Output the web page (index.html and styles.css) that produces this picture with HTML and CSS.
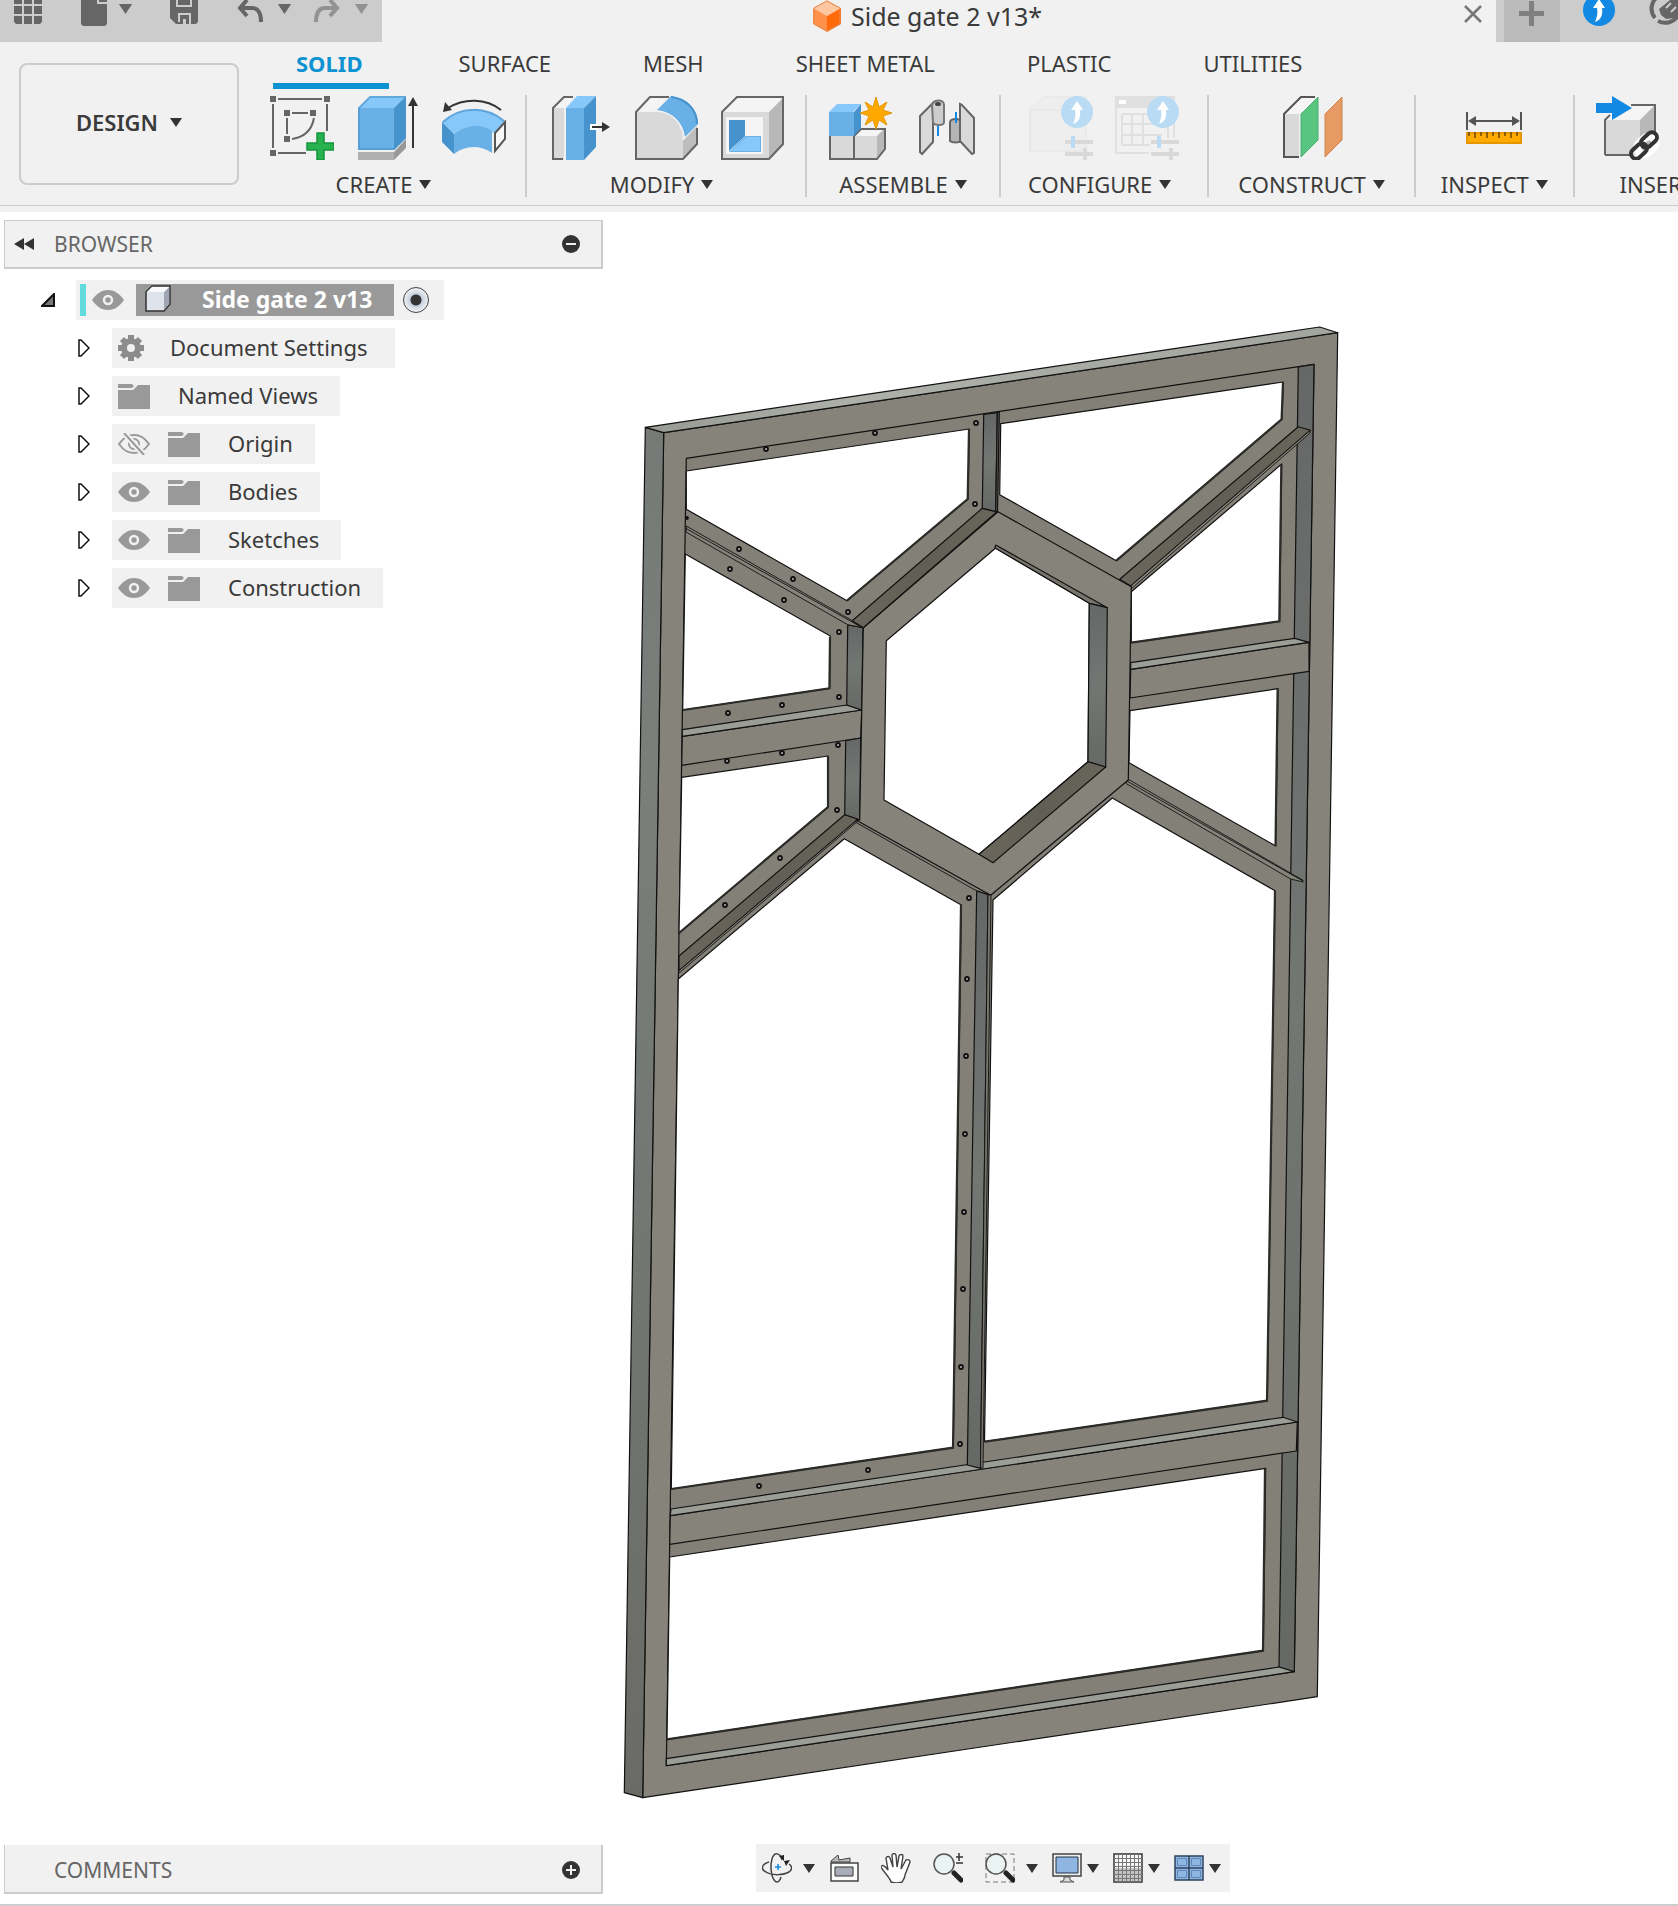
FILE: index.html
```html
<!DOCTYPE html>
<html lang="en">
<head>
<meta charset="utf-8">
<meta name="viewport" content="width=device-width, initial-scale=1">
<title>Side gate 2 v13*</title>
<link rel="stylesheet" href="styles.css">
</head>
<body>
<svg class="defs" aria-hidden="true">
  <symbol id="caret" viewBox="0 0 12 9"><path d="M0 0h12L6 9z"/></symbol>
  <symbol id="eye" viewBox="0 0 32 20"><path fill="#999" d="M0 10C5 3 10 0 16 0s11 3 16 10c-5 7-10 10-16 10S5 17 0 10z"/><circle cx="16" cy="10" r="4" fill="none" stroke="#f1f1f1" stroke-width="2.500"/></symbol>
  <symbol id="eye-off" viewBox="0 0 32 22"><path fill="none" stroke="#999" stroke-width="2" d="M1 11c5-7 9-9 15-9s10 2 15 9c-5 7-9 9-15 9S6 18 1 11z"/><circle cx="16" cy="11" r="5" fill="none" stroke="#999" stroke-width="2"/><path stroke="#f1f1f1" stroke-width="6" d="M6 0l20 22"/><path stroke="#999" stroke-width="2" d="M6 0l20 22"/></symbol>
  <symbol id="folder" viewBox="0 0 32 26"><path fill="#999" d="M0 1h14l2 2-2 2H0zM0 7h15l5-5h12v24H0z"/></symbol>
  <symbol id="expand" viewBox="0 0 12 18"><path fill="#fff" stroke="#111" stroke-width="1.500" d="M1 1h2l8 8-8 8H1z"/></symbol>
  <symbol id="up" viewBox="0 0 32 32"><circle cx="16" cy="16" r="16" fill="#1389e4"/><path fill="#fff" d="M16 5l6 9h-3c1 7-1 12-7 14 2-5 3-9 2-14h-4z"/></symbol>
</svg>

<header class="header">
  <div class="topbar">
    <div class="quick">
      <button class="icon-button" aria-label="Data panel"><svg width="28" height="24"><path fill="#666" d="M0 0h8v4H0zM10 0h8v4h-8zM20 0h8v4h-8zM0 6h8v8H0zM10 6h8v8h-8zM20 6h8v8h-8zM0 16h8v8H2l-2-2zM10 16h8v8h-8zM20 16h8v6l-2 2h-6z"/></svg></button>
      <button class="icon-button split file" aria-label="File"><svg width="26" height="26"><path fill="#666" d="M0 0h16v4h10v20l-2 2H2l-2-2zM18 0h8v2h-8z"/></svg><svg class="big-caret" width="15" height="10"><use href="#caret"/></svg></button>
      <button class="icon-button save" aria-label="Save"><svg width="28" height="24"><path fill="#666" d="M0 0h6v7h16V0h6v22l-2 2H6l-6-6zM8 0h12v5H8z"/><path fill="#ccc" d="M8 13h13v11h-2v-9h-9v7H8z"/><path fill="#ccc" d="M13 19h3v5h-3z"/></svg></button>
      <button class="icon-button split" aria-label="Undo"><svg width="26" height="24"><path fill="none" stroke="#666" stroke-width="4" d="M10 0L3 8l7 8M3 8h12c6 0 9 5 9 14"/></svg><svg class="big-caret" width="15" height="10"><use href="#caret"/></svg></button>
      <button class="icon-button split redo" aria-label="Redo"><svg width="26" height="24"><path fill="none" stroke="#929292" stroke-width="4" d="M16 0l7 8-7 8M23 8H11c-6 0-9 5-9 14"/></svg><svg class="big-caret" width="15" height="10"><use href="#caret"/></svg></button>
    </div>
    <div class="doc-tab">
      <div class="doc-name"><svg width="28" height="32"><path fill="#ffc7a0" d="M14 0l14 8-14 8L0 8z"/><path fill="#ff914b" d="M0 8l14 8v16L0 24z"/><path fill="#ff6b0a" d="M28 8l-14 8v16l14-8z"/><path fill="none" stroke="#e08a50" d="M14 1l13 7v16l-13 7L1 24V8z"/></svg><span>Side gate 2 v13*</span></div>
      <button class="icon-button close" aria-label="Close"><svg width="18" height="18"><path stroke="#777" stroke-width="2.500" d="M1 1l16 16M17 1L1 17"/></svg></button>
    </div>
    <div class="status">
      <button class="icon-button new-tab" aria-label="New design"><svg width="26" height="26"><path fill="#808080" d="M10 1h5v10h10v5H15v10h-5V16H0v-5h10z"/></svg></button>
      <button class="icon-button updates" aria-label="Updates"><svg width="32" height="26" viewBox="0 6 32 26"><use href="#up" width="32" height="32"/></svg></button>
      <button class="icon-button jobs" aria-label="Job status"><svg width="34" height="26"><path fill="none" stroke="#666" stroke-width="4" d="M6 18C-1 9 3-4 17-7M9 21c8 4 17 1 21-7"/><path fill="#666" d="M10 9l5-4 6-5h13v12l-8 6-9 1-5-4z"/><path stroke="#ccc" stroke-width="2" d="M17 8l5-5M22 12l5-5"/></svg></button>
    </div>
  </div>

  <div class="ribbon">
    <button class="workspace">DESIGN <svg class="caret" width="12" height="9"><use href="#caret"/></svg></button>
    <div class="commands">
      <nav class="tabs" aria-label="Toolbar tabs">
        <a class="tab active" href="#solid">SOLID</a>
        <a class="tab" href="#surface">SURFACE</a>
        <a class="tab" href="#mesh">MESH</a>
        <a class="tab" href="#sheet">SHEET METAL</a>
        <a class="tab" href="#plastic">PLASTIC</a>
        <a class="tab" href="#utilities">UTILITIES</a>
      </nav>
      <div class="groups">
        <section class="group create">
          <div class="tools">
            <button class="icon-button" aria-label="Create sketch"><svg width="64" height="64"><g fill="#666"><path d="M0 0h6v6H0zM54 0h6v6h-6zM14 14h6v6h-6zM40 14h6v6h-6zM14 40h6v6h-6zM0 54h6v6H0z"/></g><path fill="none" stroke="#666" stroke-width="2" d="M8 3h44M3 8v44M57 8v27M8 57h28M22 17h16M17 22v16M44 22c-2 11-9 19-22 21"/><path fill="#27b24f" stroke="#14953c" stroke-width="1.500" d="M47 37h7v10h10v7H54v10h-7V54H37v-7h10z"/></svg></button>
            <button class="icon-button" aria-label="Extrude"><svg width="64" height="64" viewBox="-2 0 64 64"><path fill="#b0b0b0" d="M0 56h36v8H0z"/><path fill="#999" d="M36 56l12-13v9L36 64z"/><path fill="#87c8fb" d="M0 12L12 0h36L36 12z"/><path fill="#69b0e6" d="M0 12h36v42H0z"/><path fill="#4692cd" d="M36 12L48 0v42L36 54z"/><path fill="none" stroke="#4a94cc" stroke-opacity=".6" stroke-width="2" d="M1 53V12L12 1h35v41L36 53z"/><path stroke="#333" stroke-width="2" d="M55 52V8"/><path fill="#333" d="M50 10l5-9 5 9z"/></svg></button>
            <button class="icon-button" aria-label="Bend"><svg width="64" height="64"><path fill="#87c8fb" d="M0 26C18 9 44 9 63 25L52 37C40 28 26 27 12 38z"/><path fill="#4692cd" d="M0 26l12 12v20L0 46z"/><path fill="#69b0e6" d="M12 38c14-11 28-10 38-3v22c-12-8-26-8-38 1z"/><path fill="none" stroke="#4a94cc" stroke-opacity=".7" stroke-width="2" d="M1 26C18 10 44 10 62 25"/><path fill="#f7f7f7" stroke="#555" stroke-width="2" d="M53 37l10-11v17L53 55z"/><path fill="none" stroke="#333" stroke-width="2" d="M59 14C44 2 22 2 6 12"/><path fill="#333" d="M1 16L3 6l7 8z"/></svg></button>
          </div>
          <button class="group-label">CREATE <svg class="caret" width="12" height="9"><use href="#caret"/></svg></button>
        </section>
        <section class="group modify">
          <div class="tools">
            <button class="icon-button" aria-label="Press pull"><svg width="64" height="64" viewBox="-4 0 64 64"><path fill="#d9d9d9" d="M1 12h11v51H1z"/><path fill="#f5f5f5" d="M1 12L12 1h10L12 12z"/><path fill="none" stroke="#666" stroke-width="2" d="M11 63H1V12L12 1h9"/><path fill="#87c8fb" d="M14 12L25 0h19L32 12z"/><path fill="#69b0e6" d="M14 12h18v52H14z"/><path fill="#4692cd" d="M32 12L44 0v51L32 64z"/><path stroke="#fff" stroke-width="6" d="M38 31h8"/><path stroke="#333" stroke-width="2" d="M40 31h12"/><path fill="#333" d="M50 26l8 5-8 5z"/></svg></button>
            <button class="icon-button" aria-label="Fillet"><svg width="64" height="64" viewBox="-1 0 64 64"><path fill="#f4f4f4" d="M1 16L15 1h20L23 14z"/><path fill="#bdbdbd" d="M48 45l14-15v18L48 63z"/><path fill="#d9d9d9" d="M1 16h20c16 0 27 12 27 30v17H1z"/><path fill="none" stroke="#666" stroke-width="2" d="M34 1H15L1 16v47h47l14-15V32"/><path fill="#69b0e6" d="M22 14L36 0c16 2 27 13 27 28L50 41C48 26 38 16 22 14z"/><path fill="none" stroke="#4692cd" stroke-width="2" d="M36 1c15 2 26 12 26 27"/></svg></button>
            <button class="icon-button" aria-label="Shell"><svg width="64" height="64" viewBox="-1 0 64 64"><path fill="#f4f4f4" d="M1 16L16 1h47L48 16z"/><path fill="#d9d9d9" d="M1 16h47v47H1z"/><path fill="#b8b8b8" d="M48 16L63 1v47L48 63z"/><path fill="none" stroke="#666" stroke-width="2" d="M1 16L16 1h46v47L48 63H1z"/><path fill="#f5f5f5" d="M5 21h37v37H5z"/><path fill="#4692cd" d="M8 24h16v16L8 55z"/><path fill="#69b0e6" d="M8 56l16-16h16v16z"/><path fill="#87c8fb" d="M10 55l15-14h14v14z"/></svg></button>
          </div>
          <button class="group-label">MODIFY <svg class="caret" width="12" height="9"><use href="#caret"/></svg></button>
        </section>
        <section class="group assemble">
          <div class="tools">
            <button class="icon-button" aria-label="New component"><svg width="64" height="64" viewBox="-1 0 64 64"><path fill="#f5f5f5" d="M25 40l7-8h24l-8 8z"/><path fill="#d9d9d9" d="M1 40h47v23H1z"/><path fill="#b8b8b8" d="M48 40l8-8v21l-8 10z"/><path fill="none" stroke="#666" stroke-width="2" d="M1 40v23h47l8-10V33H32l-7 7v23"/><path fill="#87c8fb" d="M0 16l8-8h24l-8 8z"/><path fill="#69b0e6" d="M0 16h25v24H0z"/><path fill="#4692cd" d="M25 16l7-8v24l-7 8z"/><path fill="#ffa800" stroke="#e59600" d="M47 1l3 10 8-5-4 8 9 3-9 3 4 9-8-5-3 9-3-9-8 5 4-9-9-3 9-3-4-8 8 5z"/></svg></button>
            <button class="icon-button" aria-label="Joint"><svg width="64" height="64" viewBox="-5 0 64 64"><path fill="#d9d9d9" stroke="#666" stroke-width="2" d="M1 20L14 7v39L3 58l-2-2z"/><path fill="#ccc" stroke="#777" stroke-width="2" d="M13 9c2-6 12-6 12 0v17c0 4-10 4-11 0z"/><ellipse cx="19" cy="8" rx="3" ry="2" fill="#444"/><path stroke="#1389e4" stroke-width="2" d="M19 30v10"/><path fill="#b5b5b5" stroke="#666" stroke-width="2" d="M31 26c1-4 10-4 11 0v19c-2 2-9 2-11 0z"/><path fill="#d9d9d9" stroke="#666" stroke-width="2" d="M41 8l2 1 12 13v35l-2 1-12-13z"/><path stroke="#1389e4" stroke-width="2" d="M37 16v11"/></svg></button>
          </div>
          <button class="group-label">ASSEMBLE <svg class="caret" width="12" height="9"><use href="#caret"/></svg></button>
        </section>
        <section class="group configure">
          <div class="tools">
            <button class="icon-button" aria-label="Configure design" disabled><svg width="64" height="64"><path fill="#eee" stroke="#e4e4e4" d="M1 14L14 1h43v50l-5 4H1zM1 14h34M1 55V14"/><circle cx="48" cy="16" r="16" fill="#b9dbf3"/><path fill="#fff" d="M48 5l6 9h-3c1 7-1 12-7 14 2-5 3-9 2-14h-4z"/><path stroke="#d9d9d9" stroke-width="4" d="M36 46h28M36 58h28M56 52v12"/><path stroke="#b9dbf3" stroke-width="4" d="M44 40v12"/></svg></button>
            <button class="icon-button" aria-label="Configuration table" disabled><svg width="64" height="64"><path fill="#e0e0e0" d="M0 0h60v12H0z"/><path fill="#fff" d="M4 4h7v4H4z"/><path fill="none" stroke="#e0e0e0" stroke-width="2" d="M1 12v45h33M59 12v30M7 18h46v10M7 18v31h28M7 28h46M7 39h40M17 18v31M28 18v31M53 28v14"/><circle cx="48" cy="16" r="16" fill="#b9dbf3"/><path fill="#fff" d="M48 5l6 9h-3c1 7-1 12-7 14 2-5 3-9 2-14h-4z"/><path stroke="#d9d9d9" stroke-width="4" d="M36 46h28M36 58h28M56 52v12"/><path stroke="#b9dbf3" stroke-width="4" d="M44 40v12"/></svg></button>
          </div>
          <button class="group-label">CONFIGURE <svg class="caret" width="12" height="9"><use href="#caret"/></svg></button>
        </section>
        <section class="group construct">
          <div class="tools">
            <button class="icon-button" aria-label="Offset plane"><svg width="64" height="64" viewBox="-3 0 64 64"><path fill="#f5f5f5" d="M1 18L18 1h16L17 18z"/><path fill="#d9d9d9" d="M1 18h15v43H1z"/><path fill="none" stroke="#555" stroke-width="2" d="M16 61H1V18L18 1h14"/><path fill="#5ac580" stroke="#4ab070" d="M18 18L35 1v43L18 61z"/><path fill="#e79a63" stroke="#cf8450" d="M42 18L59 1v43L42 61z"/></svg></button>
          </div>
          <button class="group-label">CONSTRUCT <svg class="caret" width="12" height="9"><use href="#caret"/></svg></button>
        </section>
        <section class="group inspect">
          <div class="tools">
            <button class="icon-button" aria-label="Measure"><svg width="64" height="64" viewBox="-4 0 64 64"><path stroke="#555" stroke-width="2" d="M1 16v18M55 16v18M5 25h46"/><path fill="#555" d="M2 25l8-5v10zM54 25l-8-5v10z"/><path fill="#ffab00" stroke="#e59600" stroke-width="2" d="M1 37h54v10H1z"/><path stroke="#6b4a00" stroke-width="1.500" d="M3 36v4M9 36v6M15 36v4M21 36v6M27 36v4M33 36v6M39 36v4M45 36v6M51 36v4"/></svg></button>
          </div>
          <button class="group-label">INSPECT <svg class="caret" width="12" height="9"><use href="#caret"/></svg></button>
        </section>
        <section class="group insert">
          <div class="tools">
            <button class="icon-button" aria-label="Insert derive"><svg width="64" height="64"><path fill="#f5f5f5" d="M9 24L25 9h34L44 24z"/><path fill="#d9d9d9" d="M9 24h35v35H9z"/><path fill="#b8b8b8" d="M44 24L59 9v35L44 59z"/><path fill="none" stroke="#666" stroke-width="2" d="M35 9h24v35M9 59V24l5-5M9 59h25"/><path fill="#1389e4" d="M0 7h16V0l20 12-20 12v-7H0z"/><g fill="none" stroke="#fff" stroke-width="8"><rect x="44" y="39" width="13" height="20" rx="6" transform="rotate(48 50 49)"/></g><g fill="none" stroke="#333" stroke-width="4"><rect x="48" y="35" width="10" height="18" rx="5" transform="rotate(48 53 44)"/><rect x="38" y="46" width="10" height="18" rx="5" transform="rotate(48 43 55)"/></g></svg></button>
            <button class="icon-button" aria-label="Insert image"><svg width="64" height="64"></svg></button>
          </div>
          <button class="group-label">INSERT <svg class="caret" width="12" height="9"><use href="#caret"/></svg></button>
        </section>
      </div>
    </div>
  </div>
</header>

<main class="workarea">
  <aside class="browser">
    <div class="panel">
      <button class="icon-button rewind" aria-label="Collapse browser"><svg width="20" height="12"><path fill="#333" d="M0 6l10-6v12zM10 6l10-6v12z"/></svg></button>
      <h2>BROWSER</h2>
      <button class="icon-button" aria-label="Minimize browser"><svg width="18" height="18"><circle cx="9" cy="9" r="9" fill="#333"/><path stroke="#f1f1f1" stroke-width="2" d="M4 9h10"/></svg></button>
    </div>
    <ul class="tree">
      <li class="row root">
        <button class="icon-button" aria-label="Collapse"><svg width="14" height="14"><path fill="#777" stroke="#111" stroke-width="2" d="M13 1v12H1z"/></svg></button>
        <div class="item">
          <span class="marker"></span>
          <button class="icon-button" aria-label="Visibility"><svg width="32" height="20"><use href="#eye"/></svg></button>
          <label class="selected" for="active-component"><svg width="26" height="28"><path fill="#dfe3ec" stroke="#333" stroke-width="1.500" d="M1 7l6-6h18v18l-6 7H1z"/><path fill="#9fa5b2" d="M19 7l5-5v17l-5 6z"/><path fill="#f8f9fb" d="M2 7l5-5h17l-5 5z"/></svg><span>Side gate 2 v13</span></label>
          <input class="activate" type="radio" id="active-component" checked>
        </div>
      </li>
      <li class="row"><button class="icon-button" aria-label="Expand"><svg width="12" height="18"><use href="#expand"/></svg></button><div class="item settings"><svg width="26" height="26"><g stroke="#8c8c8c" stroke-width="6"><path d="M13 0v26M0 13h26M4 4l18 18M22 4L4 22"/></g><circle cx="13" cy="13" r="10" fill="#8c8c8c"/><circle cx="13" cy="13" r="4" fill="#f1f1f1"/></svg><span>Document Settings</span></div></li>
      <li class="row"><button class="icon-button" aria-label="Expand"><svg width="12" height="18"><use href="#expand"/></svg></button><div class="item"><svg width="32" height="26"><use href="#folder"/></svg><span>Named Views</span></div></li>
      <li class="row"><button class="icon-button" aria-label="Expand"><svg width="12" height="18"><use href="#expand"/></svg></button><div class="item"><button class="icon-button" aria-label="Show"><svg width="32" height="22"><use href="#eye-off"/></svg></button><svg width="32" height="26"><use href="#folder"/></svg><span>Origin</span></div></li>
      <li class="row"><button class="icon-button" aria-label="Expand"><svg width="12" height="18"><use href="#expand"/></svg></button><div class="item"><button class="icon-button" aria-label="Hide"><svg width="32" height="20"><use href="#eye"/></svg></button><svg width="32" height="26"><use href="#folder"/></svg><span>Bodies</span></div></li>
      <li class="row"><button class="icon-button" aria-label="Expand"><svg width="12" height="18"><use href="#expand"/></svg></button><div class="item"><button class="icon-button" aria-label="Hide"><svg width="32" height="20"><use href="#eye"/></svg></button><svg width="32" height="26"><use href="#folder"/></svg><span>Sketches</span></div></li>
      <li class="row"><button class="icon-button" aria-label="Expand"><svg width="12" height="18"><use href="#expand"/></svg></button><div class="item"><button class="icon-button" aria-label="Hide"><svg width="32" height="20"><use href="#eye"/></svg></button><svg width="32" height="26"><use href="#folder"/></svg><span>Construction</span></div></li>
    </ul>
  </aside>

  <section class="canvas" aria-label="Model">
    <svg class="gate" viewBox="624 326 716 1474" role="img" aria-label="Steel gate frame">
      <defs>
        <linearGradient id="side" x1="0" y1="0" x2="0" y2="1"><stop offset="0" stop-color="#767a77"/><stop offset=".25" stop-color="#7a7f7b"/><stop offset="1" stop-color="#6a6b67"/></linearGradient>
        <linearGradient id="top" x1="0" y1="0" x2="1" y2="0"><stop offset="0" stop-color="#979b94"/><stop offset=".3" stop-color="#aeb1a9"/><stop offset="1" stop-color="#a3a69e"/></linearGradient>
        <linearGradient id="inner" x1="0" y1="0" x2="0" y2="1"><stop offset="0" stop-color="#656866"/><stop offset=".5" stop-color="#737774"/><stop offset="1" stop-color="#656864"/></linearGradient>
        <linearGradient id="under" x1="0" y1="0" x2="1" y2="0"><stop offset="0" stop-color="#6b675c"/><stop offset=".5" stop-color="#615e55"/><stop offset="1" stop-color="#69665b"/></linearGradient>
      </defs>
      <g stroke="#111" stroke-width="1.200" stroke-linejoin="round">
        <path fill="#86837a" d="M664.700 432.700L1338.700 332.700 1318.300 1696.700 643.700 1797.700z"/>
        <path fill="url(#side)" d="M646.300 427.300L664.700 432.700 643.700 1797.700 625.300 1792.700z"/>
        <path fill="url(#top)" d="M646.300 427.300L1320.700 327 1338.700 332.700 664.700 432.700z"/>
        <path fill="#838078" d="M687.300 458.300L1315 364.300 1295.300 1671.700 667.300 1765.700z"/>
        <path fill="url(#inner)" d="M1299.300 367L1315 364.300 1295.300 1671.700 1280 1667z"/>
        <path fill="#9b9e95" d="M667.300 1758.700L1280 1667 1295.300 1671.700 667.300 1765.700z"/>
      </g>
      <g fill="#fff" stroke="#111" stroke-width="1.200" stroke-linejoin="round">
        <path d="M687.300 471L970.300 429 969 499 848 600.700 687.300 509.300z"/>
        <path d="M686.300 554L831.300 636 830.700 688.300 683.700 710z"/>
        <path d="M682.700 777.300L829.300 756 829.300 806.700 680 933.300z"/>
        <path d="M679.300 979L845.300 838.700 962.300 905 954.300 1447.700 672.300 1489z"/>
        <path d="M994 900L1113.300 798 1276 890.700 1268.300 1400.700 985.500 1441.700z"/>
        <path d="M670.700 1557L1266.700 1468.300 1264.300 1650.700 668 1739.300z"/>
        <path d="M1001.700 423.700L1284.300 382 1283 419.300 1117.300 560.700 1000.700 494.700z"/>
        <path d="M1132.300 591.700L1282.700 464 1280.700 621.300 1132.300 642.700z"/>
        <path d="M1131 710.700L1279 688.700 1276.700 846 1130 762.700z"/>
      </g>
      <g fill="none" stroke="#2b2b28" stroke-width="2.200">
        <path d="M970 429L968.700 499 848 600.500M831 637L830.400 688.300 684 710M829 756V807L680 933M962 905L954 1447.700 672.300 1489M1276 891L1268 1400.700 986 1441.700M1266 1469L1264 1650.700 668 1739.300M1284 382L1282.600 419.300 1117.300 560.700M1282.300 465L1280.300 621.300 1132.300 642.700M1278.600 689L1276.500 846"/>
      </g>
      <g stroke="#111" stroke-width="1.200" stroke-linejoin="round">
        <!-- upper mullion -->
        <path fill="url(#inner)" d="M984.700 414.300L998.300 412.700 996.700 511.700 983.300 508.300z"/>
        <path fill="#5c5d58" d="M998.300 412.500L1000.300 412 998.500 511.500 996.700 511.700z"/>
        <!-- left middle rail -->
        <path fill="#86837a" d="M683.300 736.300L862.700 710 861.700 738 682.700 765.300z"/>
        <path fill="#9b9e95" d="M683.300 729.700L847.700 705 862.700 710 683.300 736.300z"/>
        <path fill="url(#inner)" d="M848.700 625L864 627.700 862.700 710 847.700 705z"/>
        <path fill="url(#inner)" d="M846.700 740.700L861.700 738 860.700 820 845.700 814.700z"/>
        <!-- right middle rail -->
        <path fill="#86837a" d="M1131.700 669.300L1310 642.300 1310 671.300 1131 698z"/>
        <path fill="#9b9e95" d="M1131.700 662.700L1295.700 638.300 1310 642.300 1131.700 669.300z"/>
        <!-- diagonal flats -->
        <path fill="url(#under)" d="M845.700 814.700L859 819.300 680 970.700 680 956z"/>
        <path fill="url(#under)" d="M1299.300 426.700L1311.300 430.300 1131.700 586 1120.700 579.300z"/>
        <g stroke-width=".9">
          <path fill="#86837a" d="M687.300 526L853 620.500 864.300 627.700 848.700 624.700 687 532z"/>
          <path fill="none" d="M687 528.500L862 627"/>
          <path fill="#86837a" d="M859 819.300L857.500 822.300 679.500 973.500 680 970.700z"/>
          <path fill="#86837a" d="M1311.300 430.300L1310.700 433.300 1132.300 588.700 1131.700 586z"/>
          <path fill="#86837a" d="M1129.300 779.300L1304 880.300 1304 882 1291.700 879 1126.700 783.300z"/>
          <path fill="none" d="M1128.300 781.300L1304 881"/>
        </g>
        <!-- hexagon -->
        <path fill="#86837a" d="M999 511.700L1132.300 586.700 1129.300 780 991.700 895.300 857 820 860.700 820 864.300 627.700z"/>
        <path fill="url(#under)" d="M983.300 508.300L997.700 512 864.300 627.700 853.300 620.700z"/>
        <path fill="none" stroke-width=".9" d="M856.700 822.300L977.300 890.700 992 895.300"/>
        <path fill="#fff" d="M996.700 548L1090.300 603.300 1089 761.700 980 854.300 885 800 887.300 640.700z"/>
        <path fill="#77756c" d="M996.700 545L1108.300 607.700 1090.300 603.300 996 548z"/>
        <path fill="url(#inner)" d="M1090.300 603.300L1108.300 607.700 1106.700 767 1089 761.700z"/>
        <path fill="url(#under)" d="M1089 761.700L1106.700 767 994 862.700 980 854.300z"/>
        <!-- lower rail and mullion -->
        <path fill="#86837a" d="M671.300 1515.700L1298.300 1422 1297.300 1451 670.700 1544.300z"/>
        <path fill="#9b9e95" d="M672 1509L1284 1417.300 1298.300 1422 671.300 1515.700z"/>
        <path fill="url(#inner)" d="M977.700 891L989 894.700 981.500 1468.300 968.300 1465z"/>
        <path fill="#77756c" stroke-width=".9" d="M989 894.700L992 895.300 984 1468 981.500 1468z"/>
      </g>
      <g fill="#aaa" stroke="#111" stroke-width="1.800">
        <circle cx="767" cy="449" r="2"/><circle cx="876" cy="433" r="2"/><circle cx="977" cy="423" r="2"/><circle cx="976" cy="504" r="2"/><circle cx="688" cy="518" r="1"/><circle cx="740" cy="549" r="2"/><circle cx="794" cy="579" r="2"/><circle cx="731" cy="569" r="2"/><circle cx="785" cy="600" r="2"/><circle cx="849" cy="612" r="2"/><circle cx="840" cy="632" r="2"/>
        <circle cx="840" cy="697" r="2"/><circle cx="783" cy="705" r="2"/><circle cx="729" cy="713" r="2"/><circle cx="839" cy="745" r="2"/><circle cx="783" cy="753" r="2"/><circle cx="728" cy="761" r="2"/><circle cx="838" cy="810" r="2"/><circle cx="781" cy="858" r="2"/><circle cx="726" cy="905" r="2"/>
        <circle cx="970" cy="898" r="2"/><circle cx="968" cy="979" r="2"/><circle cx="967" cy="1056" r="2"/><circle cx="966" cy="1134" r="2"/><circle cx="965" cy="1212" r="2"/><circle cx="964" cy="1289" r="2"/><circle cx="962" cy="1367" r="2"/><circle cx="961" cy="1444" r="2"/><circle cx="869" cy="1470" r="2"/><circle cx="760" cy="1486" r="2"/>
      </g>
    </svg>
  </section>

  <aside class="panel comments">
    <h2>COMMENTS</h2>
    <button class="icon-button" aria-label="Expand comments"><svg width="18" height="18"><circle cx="9" cy="9" r="9" fill="#333"/><path stroke="#f1f1f1" stroke-width="2" d="M4 9h10M9 4v10"/></svg></button>
  </aside>

  <nav class="navbar" aria-label="View controls">
    <button class="icon-button split" aria-label="Orbit"><svg width="30" height="30"><g fill="none" stroke="#444" stroke-width="1.500"><path d="M20 7C18-1 12-1 10 6c-2 7-1 18 3 22 2 2 5 1 6-4M7 9c-7 2-9 7-3 10 6 4 18 3 23 0 4-3 3-6 0-8"/></g><path stroke="#1389e4" stroke-width="1.500" d="M16 11v6M13 14h6"/><path fill="#222" d="M17 3l5-1v6zM22 8l6-1-4 6z"/></svg><svg class="caret" width="12" height="9"><use href="#caret"/></svg></button>
    <button class="icon-button single" aria-label="Look at"><svg width="30" height="30"><path fill="#bbb" stroke="#444" d="M2 8l7-6 1 5 11-2v4H2z"/><path fill="#fafafa" stroke="#444" stroke-width="1.500" d="M2 10h27v18H2z"/><path fill="#a9adb8" stroke="#333" d="M6 14h18v9H6z"/></svg></button>
    <button class="icon-button single" aria-label="Pan"><svg width="30" height="30"><path fill="#fff" stroke="#444" stroke-width="1.400" d="M10 29c0-3-9-12-10-15 1-3 4-1 7 3L5 5c1-2 3-2 4 0l3 9-1-12c1-2 3-2 4 0l1 12 2-11c1-2 4-2 4 0l-2 13 5-9c2-1 4 0 4 2l-5 13c0 3-2 5-3 7-3 1-8 1-11 0z"/></svg></button>
    <button class="icon-button single" aria-label="Zoom"><svg width="30" height="30"><path stroke="#222" stroke-width="5" stroke-linecap="round" d="M21 20l7 7"/><circle cx="11" cy="11" r="10" fill="#e8f3f2" stroke="#555" stroke-width="1.500"/><path stroke="#333" stroke-width="1.500" d="M23 4h7M26 0v8M23 10h7"/></svg></button>
    <button class="icon-button split" aria-label="Fit"><svg width="30" height="30"><path fill="none" stroke="#777" stroke-dasharray="5 3" d="M1 1h28v28H1z"/><path stroke="#222" stroke-width="5" stroke-linecap="round" d="M21 20l7 7"/><circle cx="11" cy="11" r="10" fill="#e8f3f2" stroke="#555" stroke-width="1.500"/></svg><svg class="caret" width="12" height="9"><use href="#caret"/></svg></button>
    <button class="icon-button split tight" aria-label="Display settings"><svg width="30" height="30"><path fill="#eee" stroke="#444" stroke-width="1.500" d="M1 1h28v22H1z"/><path fill="#8fb6e2" stroke="#234" d="M4 4h22v16H4z"/><path fill="#ddd" stroke="#555" d="M12 24h6v3l4 2H8l4-2z"/></svg><svg class="caret" width="12" height="9"><use href="#caret"/></svg></button>
    <button class="icon-button split tight" aria-label="Grid and snaps"><svg width="30" height="30"><path fill="#f7f7f7" stroke="#333" stroke-width="1.500" d="M1 1h28v28H1z"/><path fill="#777" fill-opacity=".4" d="M1 15h28v14H1z"/><path stroke="#777" d="M5.500 1v28M9.500 1v28M13.500 1v28M17.500 1v28M21.500 1v28M25.500 1v28M1 5.500h28M1 9.500h28M1 13.500h28M1 17.500h28M1 21.500h28M1 25.500h28"/></svg><svg class="caret" width="12" height="9"><use href="#caret"/></svg></button>
    <button class="icon-button split tight" aria-label="Viewports"><svg width="30" height="30"><path fill="#8fb6e2" stroke="#2d4360" stroke-width="1.500" d="M1 3h28v24H1zM15 3v24M1 15h28"/><path fill="none" stroke="#5f87b5" d="M3.500 5.500h9v7h-9zM17.500 5.500h9v7h-9zM3.500 17.500h9v7h-9zM17.500 17.500h9v7h-9z"/></svg><svg class="caret" width="12" height="9"><use href="#caret"/></svg></button>
  </nav>
</main>
</body>
</html>
```
FILE: styles.css
```css
* {
  box-sizing: border-box;
}

body {
  margin: 0;
  min-height: 100vh;
  display: flex;
  flex-direction: column;
  overflow-x: hidden;
  background: #fff;
  border-bottom: 2px solid #ccc;
  color: #3a3a3a;
  font: 22px/28px "Noto Sans", "Open Sans", sans-serif;
}

.defs {
  position: absolute;
  width: 0;
  height: 0;
}

svg {
  display: block;
  flex: none;
}

button {
  margin: 0;
  padding: 0;
  border: 0;
  background: none;
  color: inherit;
  font: inherit;
}

.icon-button {
  display: flex;
  flex: none;
  align-items: center;
}

.caret {
  fill: #333;
}

/* Header */
.header {
  background: #f1f1f1;
  padding-bottom: 6px;
}

.topbar {
  display: flex;
  height: 42px;
}

.topbar .icon-button {
  align-items: flex-start;
}

.quick {
  display: flex;
  align-items: flex-start;
  width: 382px;
  padding-left: 14px;
  background: #ccc;
}

.quick .split {
  gap: 14px;
  margin-right: 22px;
}

.quick .file {
  gap: 11px;
  margin: 0 37px 0 39px;
}

.quick .save {
  margin-right: 39px;
}

.big-caret {
  margin-top: 4px;
  fill: #666;
}

.redo .big-caret {
  fill: #929292;
}

.doc-tab {
  display: flex;
  flex: 1;
  padding-right: 14px;
}

.doc-name {
  display: flex;
  flex: 1;
  justify-content: center;
  gap: 10px;
  padding-left: 9px;
  font-size: 25px;
  line-height: 32px;
}

.close {
  padding-top: 5px;
}

.status {
  display: flex;
  width: 182px;
  padding-left: 8px;
  overflow: hidden;
  background: #ccc;
}

.new-tab {
  width: 56px;
  justify-content: center;
  background: #bababa;
}

.updates {
  margin: 0 34px 0 23px;
}

.ribbon {
  display: flex;
  gap: 11px;
  padding-left: 19px;
  border-bottom: 1px solid #ccc;
}

.workspace {
  display: flex;
  flex: none;
  align-items: center;
  justify-content: center;
  gap: 12px;
  width: 220px;
  height: 122px;
  margin-top: 21px;
  padding-bottom: 4px;
  border: 2px solid #ccc;
  border-radius: 8px;
  font-weight: 600;
}

.commands {
  flex: 1;
  min-width: 0;
  overflow: hidden;
}

.tabs {
  display: flex;
  gap: 46px;
  padding-left: 23px;
}

.tab {
  height: 47px;
  padding: 7px 23px 0;
  border-bottom: 6px solid transparent;
  color: inherit;
  text-decoration: none;
  white-space: nowrap;
}

.active {
  padding-right: 27px;
  border-color: #0d93d2;
  color: #0d93d2;
  font-weight: 700;
}

.groups {
  display: flex;
  padding: 6px 0 8px;
}

.group {
  display: flex;
  flex: none;
  flex-direction: column;
  align-items: center;
  gap: 10px;
  height: 102px;
  padding: 1px 21px 0;
  border-right: 2px solid #ccc;
}

.create {
  padding-left: 20px;
  padding-right: 19px;
}

.configure {
  padding-left: 27px;
  padding-right: 27px;
}

.construct {
  padding-left: 29px;
  padding-right: 29px;
}

.inspect {
  padding-left: 25px;
  padding-right: 25px;
}

.insert {
  border-right: 0;
}

.tools {
  display: flex;
  gap: 22px;
}

.group-label {
  display: flex;
  align-items: center;
  gap: 7px;
}

.create .group-label,
.modify .group-label,
.configure .group-label,
.insert .group-label {
  padding-right: 9px;
}

/* Work area */
.workarea {
  display: grid;
  flex: 1;
  grid-template-columns: 599px 1fr;
  grid-template-rows: 1fr auto;
  padding: 8px 0 10px 4px;
}

.panel {
  display: flex;
  align-items: center;
  height: 49px;
  padding: 0 21px 0 9px;
  border: 1px solid #ccc;
  border-right-width: 2px;
  border-bottom-width: 2px;
  background: #f1f1f1;
  color: #666;
}

.panel h2 {
  flex: 1;
  margin: 0;
  font-size: 21px;
  font-weight: 400;
}

.rewind {
  margin-right: 20px;
}

.comments {
  align-self: end;
  padding-top: 2px;
  padding-left: 49px;
  border-top: 0;
}

.tree {
  display: flex;
  flex-direction: column;
  gap: 8px;
  margin: 11px 0 0;
  padding: 0 0 0 74px;
  list-style: none;
}

.row {
  display: flex;
  align-items: center;
  gap: 22px;
}

.root {
  gap: 21px;
  margin-left: -37px;
}

.item {
  display: flex;
  align-items: center;
  gap: 18px;
  height: 40px;
  padding: 0 22px 0 6px;
  background: #f1f1f1;
}

.item > span:last-child {
  padding: 0 0 2px 10px;
}

.item.settings {
  gap: 16px;
  padding-right: 28px;
}

.root .item {
  gap: 9px;
  padding: 0 15px 0 4px;
}

.marker {
  width: 6px;
  height: 32px;
  margin-right: -3px;
  background: #62dbdc;
}

.selected {
  display: flex;
  align-items: center;
  gap: 31px;
  height: 32px;
  margin-left: 3px;
  padding: 0 22px 2px 9px;
  background: #999;
  color: #fff;
  font-size: 23px;
  font-weight: 700;
}

.activate {
  appearance: none;
  width: 26px;
  height: 26px;
  margin: 0;
  border: 1px solid #444;
  border-radius: 50%;
  background: radial-gradient(circle, #333 5px, #c8d0dd 6px, #eef1f5 12px);
}

.gate {
  width: min(100%, 716px);
  height: auto;
  margin: 106px 0 44px 20px;
}

.navbar {
  display: flex;
  align-items: center;
  align-self: end;
  justify-self: start;
  gap: 14px;
  height: 48px;
  margin: 0 0 2px 153px;
  padding: 0 9px 0 6px;
  background: #f1f1f1;
}

.navbar .split {
  gap: 11px;
}

.navbar .tight {
  gap: 5px;
}

.single {
  padding-right: 8px;
}
```
